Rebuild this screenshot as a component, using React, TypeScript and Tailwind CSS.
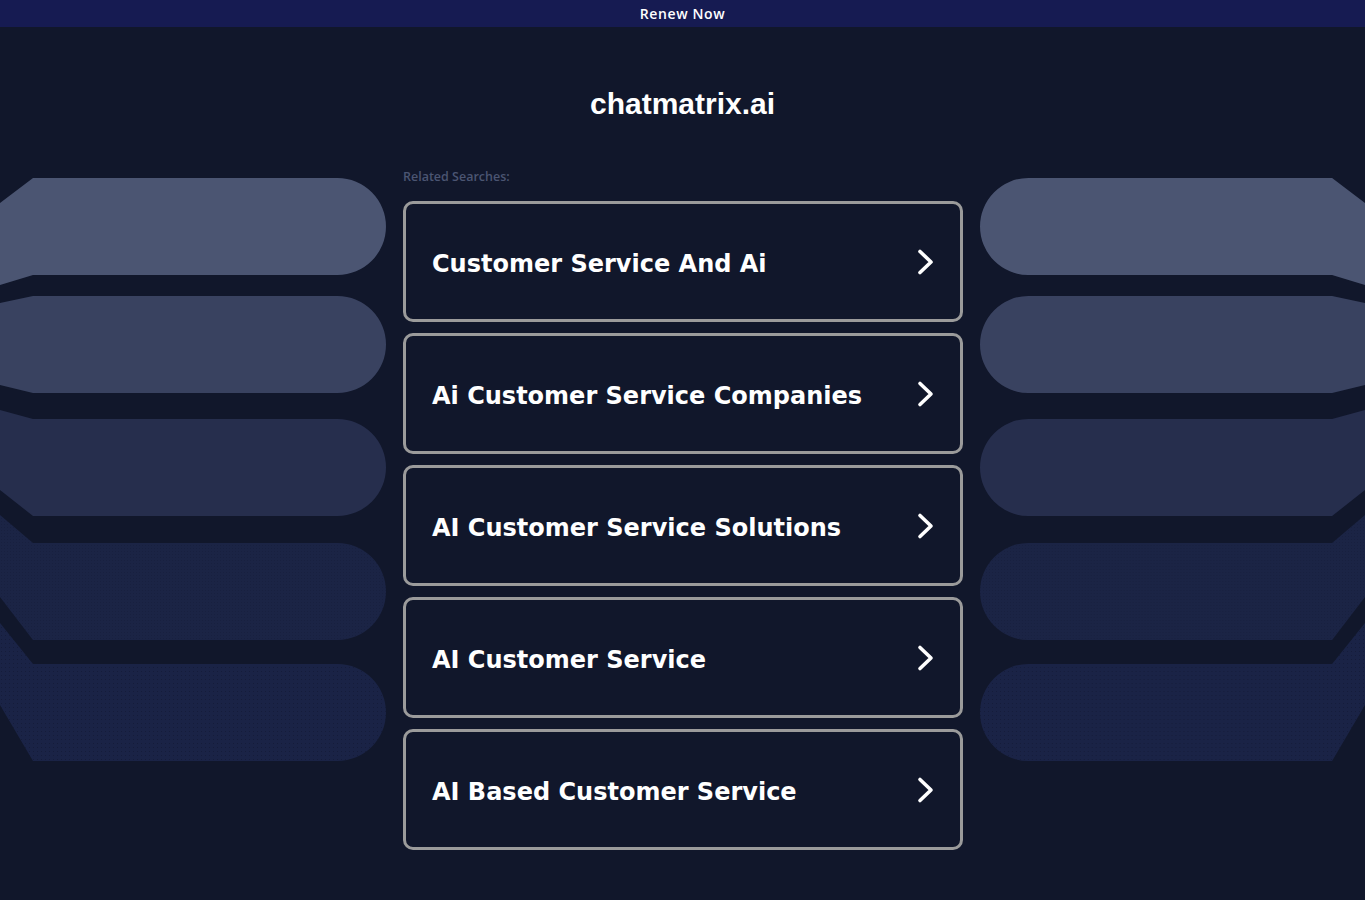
import React from 'react';

const searches = [
  'Customer Service And Ai',
  'Ai Customer Service Companies',
  'AI Customer Service Solutions',
  'AI Customer Service',
  'AI Based Customer Service',
];

// Side "tabs": pill bodies with a slanted edge running off toward the page edge.
const tabs = [
  { d: 'M0,25 L33,0 H337.5 A48.5,48.5 0 0 1 337.5,97 H33 L0,107 Z', fill: '#4b5572' },
  { d: 'M0,125 L33,118 H337.5 A48.5,48.5 0 0 1 337.5,215 H33 L0,207 Z', fill: '#394260' },
  { d: 'M0,232 L33,241 H337.5 A48.5,48.5 0 0 1 337.5,338 H33 L0,312 Z', fill: '#262e4d' },
  { d: 'M0,337 L33,365 H337.5 A48.5,48.5 0 0 1 337.5,462 H33 L0,419 Z', fill: 'url(#dots-a)' },
  { d: 'M0,445 L33,486 H337.5 A48.5,48.5 0 0 1 337.5,583 H33 L0,527 Z', fill: 'url(#dots-b)' },
];

function SideTabs({ flip = false, id }: { flip?: boolean; id: string }) {
  return (
    <svg
      viewBox="0 0 386 584"
      preserveAspectRatio="none"
      className={`block h-[584px] w-full ${flip ? '-scale-x-100' : ''}`}
    >
      <defs>
        <pattern id={`${id}-a`} width="3" height="3" patternUnits="userSpaceOnUse">
          <rect width="3" height="3" fill="#1b2445" />
          <rect x="1" y="1" width="1" height="1" fill="#18203f" />
        </pattern>
        <pattern id={`${id}-b`} width="4" height="4" patternUnits="userSpaceOnUse">
          <rect width="4" height="4" fill="#1a2346" />
          <rect x="1" y="1" width="1" height="1" fill="#151c3a" />
        </pattern>
      </defs>
      {tabs.map((t, i) => (
        <path key={i} d={t.d} fill={t.fill.replace('#dots', `#${id}`)} />
      ))}
    </svg>
  );
}

function Chevron() {
  return (
    <svg width="20" height="28" viewBox="0 0 20 28" className="shrink-0">
      <polyline
        points="4,3.5 15,14 4,24.5"
        fill="none"
        stroke="#ffffff"
        strokeWidth="3.6"
        strokeLinecap="round"
        strokeLinejoin="round"
      />
    </svg>
  );
}

export default function App() {
  return (
    <div className="min-h-[900px] w-full bg-[#11172b] font-['Liberation_Sans',Arial,sans-serif]">
      <div className="flex h-[27px] items-center justify-center bg-[#161b52]">
        <span className="font-['Open_Sans',sans-serif] text-[14px] font-semibold tracking-[0.6px] text-white">
          Renew Now
        </span>
      </div>

      <h1 className="mt-[59px] text-center text-[30px] leading-[36px] font-bold text-white">
        chatmatrix.ai
      </h1>

      <div className="mt-[49px] flex items-start">
        <div className="mt-[7px] w-[386px] shrink-0">
          <SideTabs id="left-dots" />
        </div>

        <div className="ml-[17px] w-[560px] shrink-0">
          <p className="h-[12px] font-['Open_Sans',sans-serif] text-[12.5px] leading-[12px] font-semibold text-[#4b5572]">
            Related Searches:
          </p>
          <div className="mt-[18px] flex flex-col gap-[11px]">
            {searches.map((s) => (
              <a
                key={s}
                href="#"
                className="flex h-[121px] items-center justify-between rounded-[10px] border-[3px] border-[#9b9b9b] pr-[24px] pl-[26px]"
              >
                <span className="pt-[4px] font-['DejaVu_Sans',Verdana,sans-serif] text-[24px] font-bold text-white">
                  {s}
                </span>
                <Chevron />
              </a>
            ))}
          </div>
        </div>

        <div className="mt-[7px] ml-[17px] w-[385px] shrink-0">
          <SideTabs id="right-dots" flip />
        </div>
      </div>
    </div>
  );
}
